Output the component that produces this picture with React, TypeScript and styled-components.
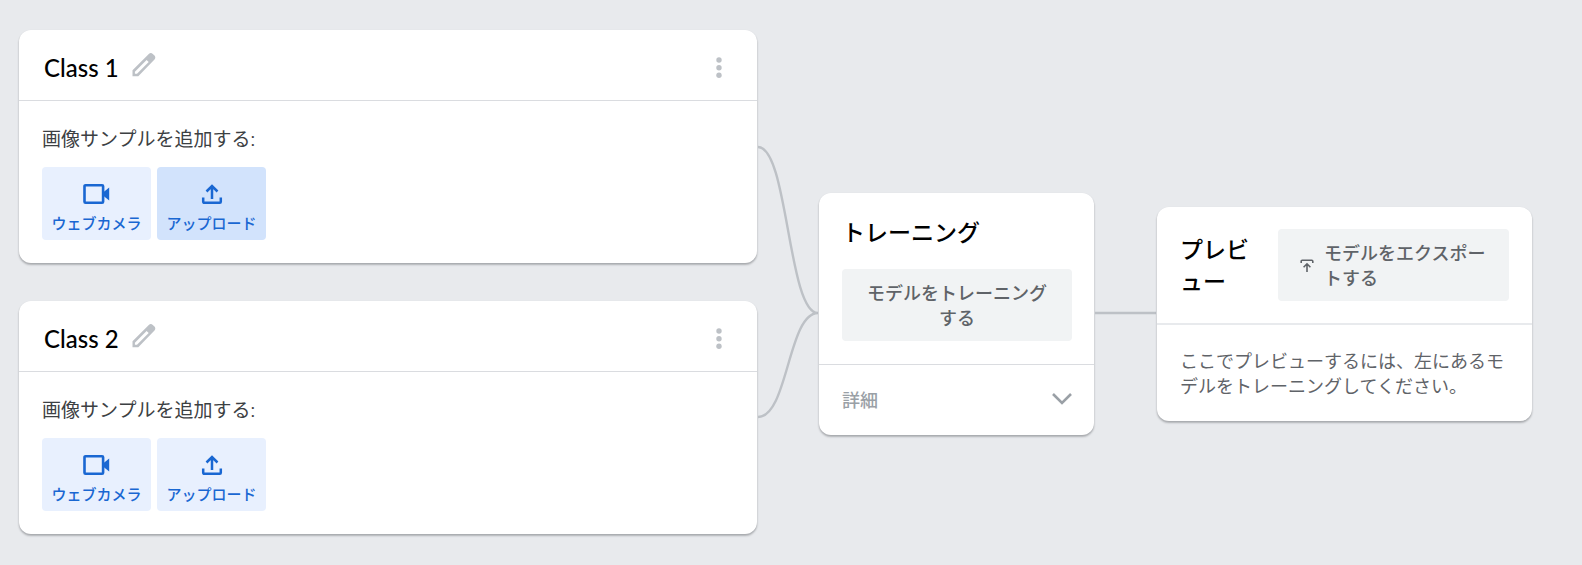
import React from "react";
import styled, { createGlobalStyle } from "styled-components";

const GlobalStyle = createGlobalStyle`
  * { box-sizing: border-box; }
  body {
    margin: 0;
    background: #e8eaed;
    color: #000;
    font-family: Roboto, "Noto Sans CJK JP", sans-serif;
  }
  button { font-family: inherit; border: 0; cursor: pointer; }
  svg { display: block; flex: none; }
`;

const Pipeline = styled.main`
  display: flex;
  align-items: stretch;
  min-width: 1100px;
  padding: 30px 50px 31px 19px;
`;

const ClassColumn = styled.div`
  flex: 1;
  min-width: 0;
  display: flex;
  flex-direction: column;
  gap: 38px;
`;

const Stage = styled.div<{ $width: number }>`
  flex: none;
  width: ${(p) => p.$width}px;
  padding-top: 64px;
  display: flex;
  flex-direction: column;
  justify-content: center;
`;

const Card = styled.section`
  background: #fff;
  border-radius: 12px;
  box-shadow: 0 2px 2px rgba(60, 64, 67, 0.28), 0 1px 2px rgba(60, 64, 67, 0.16);
`;

const ClassHeader = styled.header`
  display: flex;
  align-items: center;
  height: 71px;
  padding: 0 24px 0 25px;
  border-bottom: 1px solid #dadce0;
`;

const Heading = styled.h2`
  margin: 0;
  padding-top: 4px;
  font-size: 23px;
  line-height: 32px;
  font-weight: 500;
`;

const ClassName = styled(Heading)`
  padding-top: 6px;
  font-family: Lato, sans-serif;
  font-size: 24px;
`;

const IconButton = styled.button`
  display: flex;
  padding: 0;
  background: none;
  color: #bdc1c6;
`;

const MenuButton = styled(IconButton)`
  margin-left: auto;
  padding-top: 5px;
`;

const EditButton = styled(IconButton)`
  margin-left: 12px;
`;

const ClassBody = styled.div`
  padding: 25px 23px 23px;
`;

const SampleLabel = styled.p`
  margin: 0 0 13px;
  color: #3c4043;
  font-size: 19px;
  line-height: 28px;
`;

const ButtonRow = styled.div`
  display: flex;
  gap: 6px;
`;

const SampleButton = styled.button<{ $active?: boolean }>`
  display: flex;
  flex-direction: column;
  align-items: center;
  gap: 6px;
  width: 109px;
  height: 73px;
  padding: 15px 0 0;
  border-radius: 4px;
  background: ${(p) => (p.$active ? "#d2e3fc" : "#e8f0fe")};
  color: #1967d2;
  font-size: 15px;
  line-height: 24px;
  font-weight: 500;
  white-space: nowrap;
`;

const TrainingBody = styled.div`
  display: flex;
  flex-direction: column;
  gap: 19px;
  padding: 21px 22px 23px 23px;
  border-bottom: 1px solid #dadce0;
`;

const ActionButton = styled.button`
  display: flex;
  align-items: center;
  justify-content: center;
  gap: 10px;
  min-height: 72px;
  padding: 12px 22px 10px;
  border-radius: 4px;
  background: #f1f3f4;
  color: #5f6368;
  font-size: 18px;
  line-height: 25px;
  font-weight: 500;
`;

const ExportButton = styled(ActionButton)`
  flex: none;
  width: 231px;
  text-align: left;
`;

const AdvancedButton = styled.button`
  display: flex;
  align-items: center;
  justify-content: space-between;
  width: 100%;
  height: 70px;
  padding: 0 22px 0 23px;
  background: none;
  color: #9aa0a6;
  font-size: 18px;
  line-height: 25px;
  font-weight: 500;
`;

const PreviewHeader = styled.header`
  display: flex;
  align-items: center;
  justify-content: space-between;
  gap: 24px;
  padding: 22px 23px;
  border-bottom: 2px solid #e8eaed;
`;

const PreviewText = styled.p`
  margin: 0;
  padding: 24px 23px 22px;
  color: #5f6368;
  font-size: 18px;
  line-height: 25px;
`;

const PencilIcon = () => (
  <svg width="25" height="26" viewBox="0 0 25 26" aria-hidden="true">
    <path
      fill="currentColor"
      fillRule="evenodd"
      d="M1.500 24.200V18.200L17.800 1.900q2-1.600 4 0l1.700 1.700q1.600 2 0 4L7.300 24.200zM3.900 19.700L15.600 8l2.100 2.100L6 21.800H3.900z"
    />
  </svg>
);

const MoreIcon = () => (
  <svg width="28" height="24" viewBox="0 0 28 24" fill="currentColor" aria-hidden="true">
    <circle cx="14" cy="4" r="2.700" />
    <circle cx="14" cy="11.700" r="2.700" />
    <circle cx="14" cy="19.300" r="2.700" />
  </svg>
);

const WebcamIcon = () => (
  <svg width="28" height="24" viewBox="0 0 28 24" aria-hidden="true">
    <rect x="1.500" y="3.200" width="18.600" height="17.600" rx="1" fill="none" stroke="currentColor" strokeWidth="2.600" />
    <path d="M20 10.500L26.200 5.500v13L20 13.500z" fill="currentColor" />
  </svg>
);

const UploadIcon = () => (
  <svg width="24" height="24" viewBox="0 0 24 24" fill="none" stroke="currentColor" strokeWidth="2.500" aria-hidden="true">
    <path d="M3.200 15.500v4.300a1 1 0 0 0 1 1h15.600a1 1 0 0 0 1-1v-4.300M12 17V4M6.500 9.500L12 4l5.500 5.500" />
  </svg>
);

const ExportIcon = () => (
  <svg width="14" height="14" viewBox="0 0 14 14" fill="none" stroke="currentColor" strokeWidth="1.600" aria-hidden="true">
    <path d="M1.200 4V2.200a1 1 0 0 1 1-1h9.600a1 1 0 0 1 1 1V4M7 13V5M3.600 8.200L7 4.800l3.400 3.400" />
  </svg>
);

const ChevronIcon = () => (
  <svg width="20" height="16" viewBox="0 0 20 16" fill="none" stroke="currentColor" strokeWidth="2.600" aria-hidden="true">
    <path d="M1 2l9 9 9-9" />
  </svg>
);

const MergeLines = () => (
  <svg width="62" height="504" viewBox="0 0 62 504" fill="none" stroke="#bdc1c6" strokeWidth="2.400" aria-hidden="true">
    <path d="M1 117C31 117 31 283 61 283M1 387C31 387 31 283 61 283" />
  </svg>
);

const StraightLine = () => (
  <svg width="63" height="504" viewBox="0 0 63 504" fill="none" stroke="#bdc1c6" strokeWidth="2.400" aria-hidden="true">
    <path d="M1 283h61" />
  </svg>
);

function ClassCard({ name, uploadActive }: { name: string; uploadActive?: boolean }) {
  return (
    <Card>
      <ClassHeader>
        <ClassName>{name}</ClassName>
        <EditButton type="button" aria-label={`${name} の名前を編集`}><PencilIcon /></EditButton>
        <MenuButton type="button" aria-label={`${name} のメニュー`}><MoreIcon /></MenuButton>
      </ClassHeader>
      <ClassBody>
        <SampleLabel>画像サンプルを追加する:</SampleLabel>
        <ButtonRow>
          <SampleButton type="button"><WebcamIcon />ウェブカメラ</SampleButton>
          <SampleButton type="button" $active={uploadActive}><UploadIcon />アップロード</SampleButton>
        </ButtonRow>
      </ClassBody>
    </Card>
  );
}

export default function App() {
  return (
    <>
      <GlobalStyle />
      <Pipeline lang="ja">
        <ClassColumn>
          <ClassCard name="Class 1" uploadActive />
          <ClassCard name="Class 2" />
        </ClassColumn>
        <MergeLines />
        <Stage $width={275}>
          <Card>
            <TrainingBody>
              <Heading>トレーニング</Heading>
              <ActionButton type="button">モデルをトレーニングする</ActionButton>
            </TrainingBody>
            <AdvancedButton type="button" aria-expanded={false}>詳細<ChevronIcon /></AdvancedButton>
          </Card>
        </Stage>
        <StraightLine />
        <Stage $width={375}>
          <Card>
            <PreviewHeader>
              <Heading>プレビュー</Heading>
              <ExportButton type="button"><ExportIcon /><span>モデルをエクスポートする</span></ExportButton>
            </PreviewHeader>
            <PreviewText>ここでプレビューするには、左にあるモデルをトレーニングしてください。</PreviewText>
          </Card>
        </Stage>
      </Pipeline>
    </>
  );
}
